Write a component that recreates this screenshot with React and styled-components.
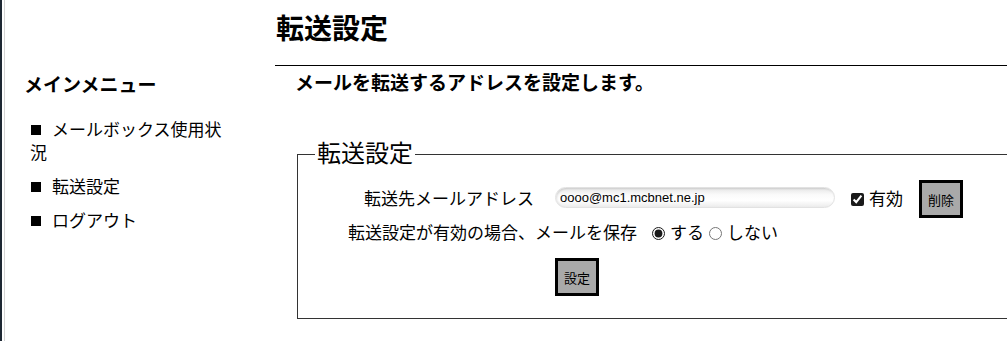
import React, { useState } from "react";
import styled, { createGlobalStyle } from "styled-components";

const GlobalStyle = createGlobalStyle`
  html, body {
    margin: 0;
    padding: 0;
    background: #fff;
    overflow: hidden;
  }
  body {
    font-family: "Noto Sans CJK JP", "Noto Sans", sans-serif;
    font-size: 17px;
    color: #000;
  }
`;

const Frame = styled.div`
  border-left: 2px solid #1d2733;
  padding-left: 2px;
  height: 341px;
  box-sizing: border-box;
`;

const Page = styled.div`
  display: flex;
  border-left: 1px solid #d4d4d4;
  height: 100%;
  width: 1040px;
`;

const Sidebar = styled.nav`
  width: 270px;
  flex: none;
  padding-top: 70px;
  box-sizing: border-box;
`;

const MenuTitle = styled.h2`
  margin: 0 0 19px 19px;
  font-size: 19px;
  line-height: 28px;
  font-weight: bold;
`;

const MenuList = styled.ul`
  list-style: none;
  margin: 0;
  padding: 0 38px 0 25px;
`;

const MenuItem = styled.li`
  line-height: 23px;
  margin-bottom: 11px;
  &::before {
    content: "";
    display: inline-block;
    width: 10px;
    height: 10px;
    margin: 0 11px 0 1px;
    background: #000;
    vertical-align: 1px;
  }
`;

const Main = styled.main`
  width: 765px;
  flex: none;
`;

const Title = styled.h1`
  margin: 0;
  padding: 7px 0 0 1px;
  font-size: 28px;
  line-height: 40px;
  font-weight: bold;
`;

const Rule = styled.hr`
  margin: 18px 0 0;
  border: none;
  border-top: 1px solid #000;
  height: 0;
`;

const Lead = styled.h2`
  margin: 2px 0 0;
  padding-left: 20px;
  font-size: 19px;
  line-height: 28px;
  font-weight: bold;
`;

const Box = styled.fieldset`
  margin: 44px 0 0 22px;
  padding: 0;
  border: 1px solid #333;
  min-width: 0;
`;

const Legend = styled.legend`
  margin-left: 17px;
  padding: 0 2px;
  font-size: 24px;
  line-height: 28px;
  position: relative;
  top: -2px;
`;

const Form = styled.div`
  display: grid;
  grid-template-columns: 208px auto;
  align-items: center;
  padding: 12px 0 22px 47px;
`;

const Label = styled.div`
  text-align: center;
  line-height: 24px;
  margin-top: -3px;
`;

const Cell = styled.div`
  display: flex;
  align-items: center;
  padding-left: ${(p) => p.$indent || 0}px;
  grid-column: ${(p) => (p.$span ? "1 / span 2" : "2")};
  margin-top: ${(p) => p.$top || 0}px;
  line-height: 24px;
`;

const Inline = styled.span`
  margin-top: -3px;
`;

const TextInput = styled.input`
  width: 280px;
  height: 21px;
  box-sizing: border-box;
  padding: 0 4px;
  margin-top: -3px;
  border: 1px solid #e2e2e2;
  border-radius: 11px;
  background: linear-gradient(#e6e6e6, #fafafa 35%, #fff 65%, #ececec);
  box-shadow: inset 1px 1px 2px rgba(0, 0, 0, 0.12);
  font-family: "Liberation Sans", Arial, sans-serif;
  font-size: 13px;
  color: #000;
  outline: none;
`;

const Check = styled.input`
  width: 13px;
  height: 13px;
  margin: 0 5px 0 ${(p) => p.$left || 0}px;
  accent-color: #1a1a1a;
`;

const Button = styled.button`
  width: 44px;
  height: 38px;
  margin-left: ${(p) => p.$left || 0}px;
  padding: 0;
  border: 3px solid #000;
  background: #a9a9a9;
  font-family: "Noto Sans CJK JP", sans-serif;
  font-size: 13px;
  color: #000;
`;

const App = () => {
  const [enabled, setEnabled] = useState(true);
  const [keep, setKeep] = useState("yes");

  return (
    <>
      <GlobalStyle />
      <Frame>
        <Page>
          <Sidebar>
            <MenuTitle>メインメニュー</MenuTitle>
            <MenuList>
              <MenuItem>メールボックス使用状況</MenuItem>
              <MenuItem>転送設定</MenuItem>
              <MenuItem>ログアウト</MenuItem>
            </MenuList>
          </Sidebar>
          <Main>
            <Title>転送設定</Title>
            <Rule />
            <Lead>メールを転送するアドレスを設定します。</Lead>
            <Box>
              <Legend>転送設定</Legend>
              <Form>
                <Label>転送先メールアドレス</Label>
                <Cell $indent={2}>
                  <TextInput defaultValue="oooo@mc1.mcbnet.ne.jp" />
                  <Check
                    type="checkbox"
                    $left={16}
                    checked={enabled}
                    onChange={(e) => setEnabled(e.target.checked)}
                  />
                  <Inline>有効</Inline>
                  <Button $left={16}>削除</Button>
                </Cell>
                <Cell $span $indent={3} $top={5}>
                  <Inline>転送設定が有効の場合、メールを保存</Inline>
                  <Check
                    type="radio"
                    name="keep"
                    $left={15}
                    checked={keep === "yes"}
                    onChange={() => setKeep("yes")}
                  />
                  <Inline>する</Inline>
                  <Check
                    type="radio"
                    name="keep"
                    $left={5}
                    checked={keep === "no"}
                    onChange={() => setKeep("no")}
                  />
                  <Inline>しない</Inline>
                </Cell>
                <Cell $indent={2} $top={14}>
                  <Button>設定</Button>
                </Cell>
              </Form>
            </Box>
          </Main>
        </Page>
      </Frame>
    </>
  );
};

export default App;
